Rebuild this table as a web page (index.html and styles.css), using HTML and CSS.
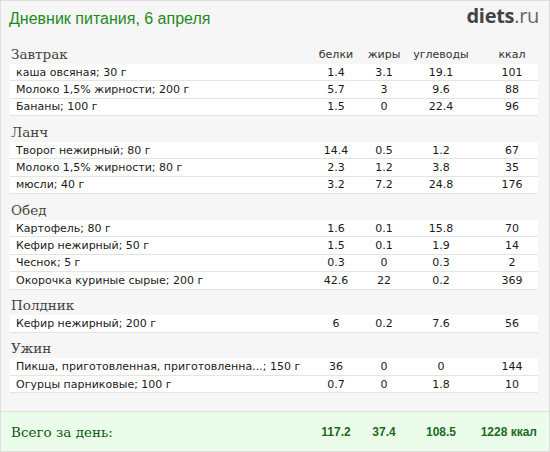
FILE: index.html
```html
<!DOCTYPE html>
<html lang="ru">
<head>
    <meta charset="UTF-8">
    <title>Дневник питания</title>
    <link rel="stylesheet" href="styles.css">
</head>
<body>
    <div class="diary">
        <div class="diary-head">
            <div class="diary-title">Дневник питания, 6 апреля</div>
            <div class="logo">diets<span>.ru</span></div>
        </div>

        <div class="meals">
            <div class="meal">
                <div class="meal-head">
                    <div class="meal-name">Завтрак</div>
                    <div class="col">белки</div>
                    <div class="col">жиры</div>
                    <div class="col">углеводы</div>
                    <div class="col last">ккал</div>
                </div>
                <div class="row"><div class="food">каша овсяная; 30 г</div><div class="col">1.4</div><div class="col">3.1</div><div class="col">19.1</div><div class="col last">101</div></div>
                <div class="row"><div class="food">Молоко 1,5% жирности; 200 г</div><div class="col">5.7</div><div class="col">3</div><div class="col">9.6</div><div class="col last">88</div></div>
                <div class="row"><div class="food">Бананы; 100 г</div><div class="col">1.5</div><div class="col">0</div><div class="col">22.4</div><div class="col last">96</div></div>
            </div>

            <div class="meal">
                <div class="meal-head"><div class="meal-name">Ланч</div></div>
                <div class="row"><div class="food">Творог нежирный; 80 г</div><div class="col">14.4</div><div class="col">0.5</div><div class="col">1.2</div><div class="col last">67</div></div>
                <div class="row"><div class="food">Молоко 1,5% жирности; 80 г</div><div class="col">2.3</div><div class="col">1.2</div><div class="col">3.8</div><div class="col last">35</div></div>
                <div class="row"><div class="food">мюсли; 40 г</div><div class="col">3.2</div><div class="col">7.2</div><div class="col">24.8</div><div class="col last">176</div></div>
            </div>

            <div class="meal">
                <div class="meal-head"><div class="meal-name">Обед</div></div>
                <div class="row"><div class="food">Картофель; 80 г</div><div class="col">1.6</div><div class="col">0.1</div><div class="col">15.8</div><div class="col last">70</div></div>
                <div class="row"><div class="food">Кефир нежирный; 50 г</div><div class="col">1.5</div><div class="col">0.1</div><div class="col">1.9</div><div class="col last">14</div></div>
                <div class="row"><div class="food">Чеснок; 5 г</div><div class="col">0.3</div><div class="col">0</div><div class="col">0.3</div><div class="col last">2</div></div>
                <div class="row"><div class="food">Окорочка куриные сырые; 200 г</div><div class="col">42.6</div><div class="col">22</div><div class="col">0.2</div><div class="col last">369</div></div>
            </div>

            <div class="meal">
                <div class="meal-head"><div class="meal-name">Полдник</div></div>
                <div class="row"><div class="food">Кефир нежирный; 200 г</div><div class="col">6</div><div class="col">0.2</div><div class="col">7.6</div><div class="col last">56</div></div>
            </div>

            <div class="meal">
                <div class="meal-head"><div class="meal-name">Ужин</div></div>
                <div class="row"><div class="food">Пикша, приготовленная, приготовленна...; 150 г</div><div class="col">36</div><div class="col">0</div><div class="col">0</div><div class="col last">144</div></div>
                <div class="row"><div class="food">Огурцы парниковые; 100 г</div><div class="col">0.7</div><div class="col">0</div><div class="col">1.8</div><div class="col last">10</div></div>
            </div>
        </div>

        <div class="total">
            <div class="total-name">Всего за день:</div>
            <div class="col">117.2</div>
            <div class="col">37.4</div>
            <div class="col">108.5</div>
            <div class="col last">1228 ккал</div>
        </div>
    </div>
</body>
</html>
```

FILE: styles.css
```css
body {
    margin: 0;
    font-family: "DejaVu Sans", Verdana, sans-serif;
}

.diary {
    width: 550px;
    height: 452px;
    box-sizing: border-box;
    border: 1px solid #dedede;
    background-color: #f6f6f6;
    display: flex;
    flex-direction: column;
}

.diary-head {
    display: flex;
    justify-content: space-between;
    padding: 7px 10px 0 8px;
    height: 36px;
    box-sizing: border-box;
}

.diary-title {
    font-family: "Liberation Sans", Arial, sans-serif;
    font-size: 16px;
    line-height: 22px;
    color: #1e8a1e;
}

.logo {
    font-family: "Open Sans", sans-serif;
    font-size: 20px;
    font-weight: bold;
    line-height: 16px;
    color: #444;
    letter-spacing: -0.3px;
}

.logo span {
    font-weight: normal;
    color: #666;
}

.meals {
    padding: 7px 11px 0 9px;
}

.meal {
    margin-bottom: 5.8px;
}

.meal-head,
.row,
.total {
    display: grid;
    grid-template-columns: 1fr 50px 46px 68px 63px;
    align-items: center;
}

.meal-head {
    height: 20px;
    font-size: 11px;
    color: #333;
}

.meal-name {
    font-family: "DejaVu Serif", Georgia, serif;
    font-size: 13.5px;
    color: #444;
    padding-left: 1px;
}

.row {
    height: 17.4px;
    box-sizing: border-box;
    background-color: #fff;
    border-bottom: 1px solid #e4e4e4;
    font-size: 11px;
    color: #1a1a1a;
}

.food {
    padding-left: 6px;
    white-space: nowrap;
}

.col {
    text-align: center;
}

.col.last {
    padding-left: 11px;
}

.total {
    margin-top: auto;
    height: 40px;
    box-sizing: border-box;
    border-top: 1px solid #dedede;
    background-color: #ebfdea;
    padding: 0 11px 0 9px;
    font-family: "Liberation Sans", Arial, sans-serif;
    font-size: 12px;
    font-weight: bold;
    color: #1d6a1d;
}

.total-name {
    font-family: "DejaVu Serif", Georgia, serif;
    font-size: 13.5px;
    font-weight: normal;
    color: #0c5a0c;
    padding-left: 1px;
}

.total .col.last {
    justify-self: end;
    white-space: nowrap;
    padding: 0 1px 0 0;
}
```
